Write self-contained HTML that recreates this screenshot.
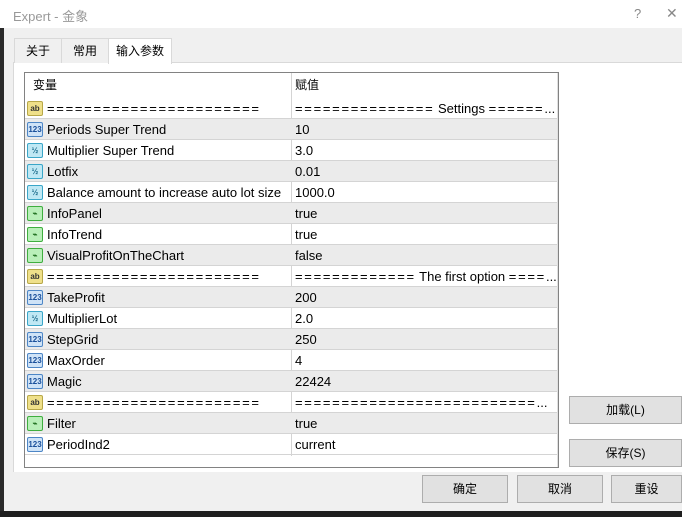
<!DOCTYPE html>
<html><head><meta charset="utf-8"><style>
*{margin:0;padding:0;box-sizing:border-box}
body{width:682px;height:517px;overflow:hidden;background:#f0f0f0;font-family:"Liberation Sans","Noto Sans CJK SC",sans-serif;font-size:12px;color:#000;position:relative}
.abs{position:absolute}
.title{left:0;top:0;width:682px;height:28px;background:#fff}
.tab{top:38px;height:25px;border:1px solid #d9d9d9;border-bottom:none;background:#f0f0f0;line-height:24px;text-align:center;font-size:12px}
.panel{left:13px;top:62px;width:669px;height:410px;background:#fff;border-top:1px solid #d9d9d9;border-left:1px solid #d9d9d9}
.tbl{left:24px;top:72px;width:535px;height:396px;border:1px solid #828282;background:#fff;overflow:hidden;font-size:13px}
.row{position:absolute;left:0;width:532px;height:21px;border-bottom:1px solid #d4d4d4;line-height:22px}
.row.g{background:#ebebeb}
.c1{position:absolute;left:22px;top:0;white-space:nowrap}
.c2{position:absolute;left:270px;top:0;width:262px;white-space:nowrap;overflow:hidden;padding-left:0}
.eq{letter-spacing:1.7px}
.vl{position:absolute;left:266px;top:0;width:1px;height:383px;background:#d4d4d4}
.ic{position:absolute;left:2px;top:3px;width:16px;height:15px;border-radius:2px;font-size:8px;line-height:13px;text-align:center;font-weight:bold}
.ab{background:#efe08a;border:1px solid #b8a848;color:#333}
.n{background:#cfe3f7;border:1px solid #4d86c6;color:#1a4f9a}
.h{background:#bfe8f4;border:1px solid #3aa6c8;color:#1a6a8a}
.b{background:#b9efb9;border:1px solid #3fae3f;color:#1a6a1a}
.btn{height:28px;border:1px solid #adadad;background:#e1e1e1;text-align:center;line-height:26px}
</style></head><body>
<div class="abs" style="left:0;top:28px;width:4px;height:489px;background:#2a2a2a"></div>
<div class="abs title"></div>
<div class="abs" style="left:13px;top:6px;color:#999;font-size:13px">Expert - 金象</div>
<div class="abs" style="left:634px;top:6px;color:#888;font-size:13px">?</div>
<div class="abs" style="left:666px;top:5px;color:#888;font-size:14px">✕</div>
<div class="abs panel"></div>
<div class="abs tab" style="left:14px;width:48px">关于</div>
<div class="abs tab" style="left:61px;width:48px">常用</div>
<div class="abs tab" style="left:108px;top:38px;width:64px;height:26px;background:#fff">输入参数</div>
<div class="abs tbl">
<div class="row" style="top:0;height:24px;line-height:24px;border-bottom:none;font-size:12px"><span class="c1" style="left:8px">变量</span><span class="c2">赋值</span></div>
<div class="vl"></div>
<div style="position:absolute;left:532px;top:0;width:1px;height:395px;background:#e0e0e0"></div>
<div class="row" style="top:25px"><span class="ic ab">ab</span><span class="c1 eq">=======================</span><span class="c2"><span class="eq">===============</span> Settings <span class="eq">======</span>...</span></div>
<div class="row g" style="top:46px"><span class="ic n">123</span><span class="c1">Periods Super Trend</span><span class="c2">10</span></div>
<div class="row" style="top:67px"><span class="ic h">½</span><span class="c1">Multiplier Super Trend</span><span class="c2">3.0</span></div>
<div class="row g" style="top:88px"><span class="ic h">½</span><span class="c1">Lotfix</span><span class="c2">0.01</span></div>
<div class="row" style="top:109px"><span class="ic h">½</span><span class="c1">Balance amount to increase auto lot size</span><span class="c2">1000.0</span></div>
<div class="row g" style="top:130px"><span class="ic b">⌁</span><span class="c1">InfoPanel</span><span class="c2">true</span></div>
<div class="row" style="top:151px"><span class="ic b">⌁</span><span class="c1">InfoTrend</span><span class="c2">true</span></div>
<div class="row g" style="top:172px"><span class="ic b">⌁</span><span class="c1">VisualProfitOnTheChart</span><span class="c2">false</span></div>
<div class="row" style="top:193px"><span class="ic ab">ab</span><span class="c1 eq">=======================</span><span class="c2"><span class="eq">=============</span> The first option <span class="eq">====</span>...</span></div>
<div class="row g" style="top:214px"><span class="ic n">123</span><span class="c1">TakeProfit</span><span class="c2">200</span></div>
<div class="row" style="top:235px"><span class="ic h">½</span><span class="c1">MultiplierLot</span><span class="c2">2.0</span></div>
<div class="row g" style="top:256px"><span class="ic n">123</span><span class="c1">StepGrid</span><span class="c2">250</span></div>
<div class="row" style="top:277px"><span class="ic n">123</span><span class="c1">MaxOrder</span><span class="c2">4</span></div>
<div class="row g" style="top:298px"><span class="ic n">123</span><span class="c1">Magic</span><span class="c2">22424</span></div>
<div class="row" style="top:319px"><span class="ic ab">ab</span><span class="c1 eq">=======================</span><span class="c2"><span class="eq">==========================</span>...</span></div>
<div class="row g" style="top:340px"><span class="ic b">⌁</span><span class="c1">Filter</span><span class="c2">true</span></div>
<div class="row" style="top:361px"><span class="ic n">123</span><span class="c1">PeriodInd2</span><span class="c2">current</span></div>
</div>
<div class="abs btn" style="left:569px;top:396px;width:113px">加载(L)</div>
<div class="abs btn" style="left:569px;top:439px;width:113px">保存(S)</div>
<div class="abs" style="left:13px;top:472px;width:669px;height:40px;background:#f0f0f0"></div>
<div class="abs btn" style="left:422px;top:475px;width:86px">确定</div>
<div class="abs btn" style="left:517px;top:475px;width:86px">取消</div>
<div class="abs btn" style="left:611px;top:475px;width:71px">重设</div>
<div class="abs" style="left:0;top:511px;width:682px;height:6px;background:#1e1e1e"></div>
</body></html>
